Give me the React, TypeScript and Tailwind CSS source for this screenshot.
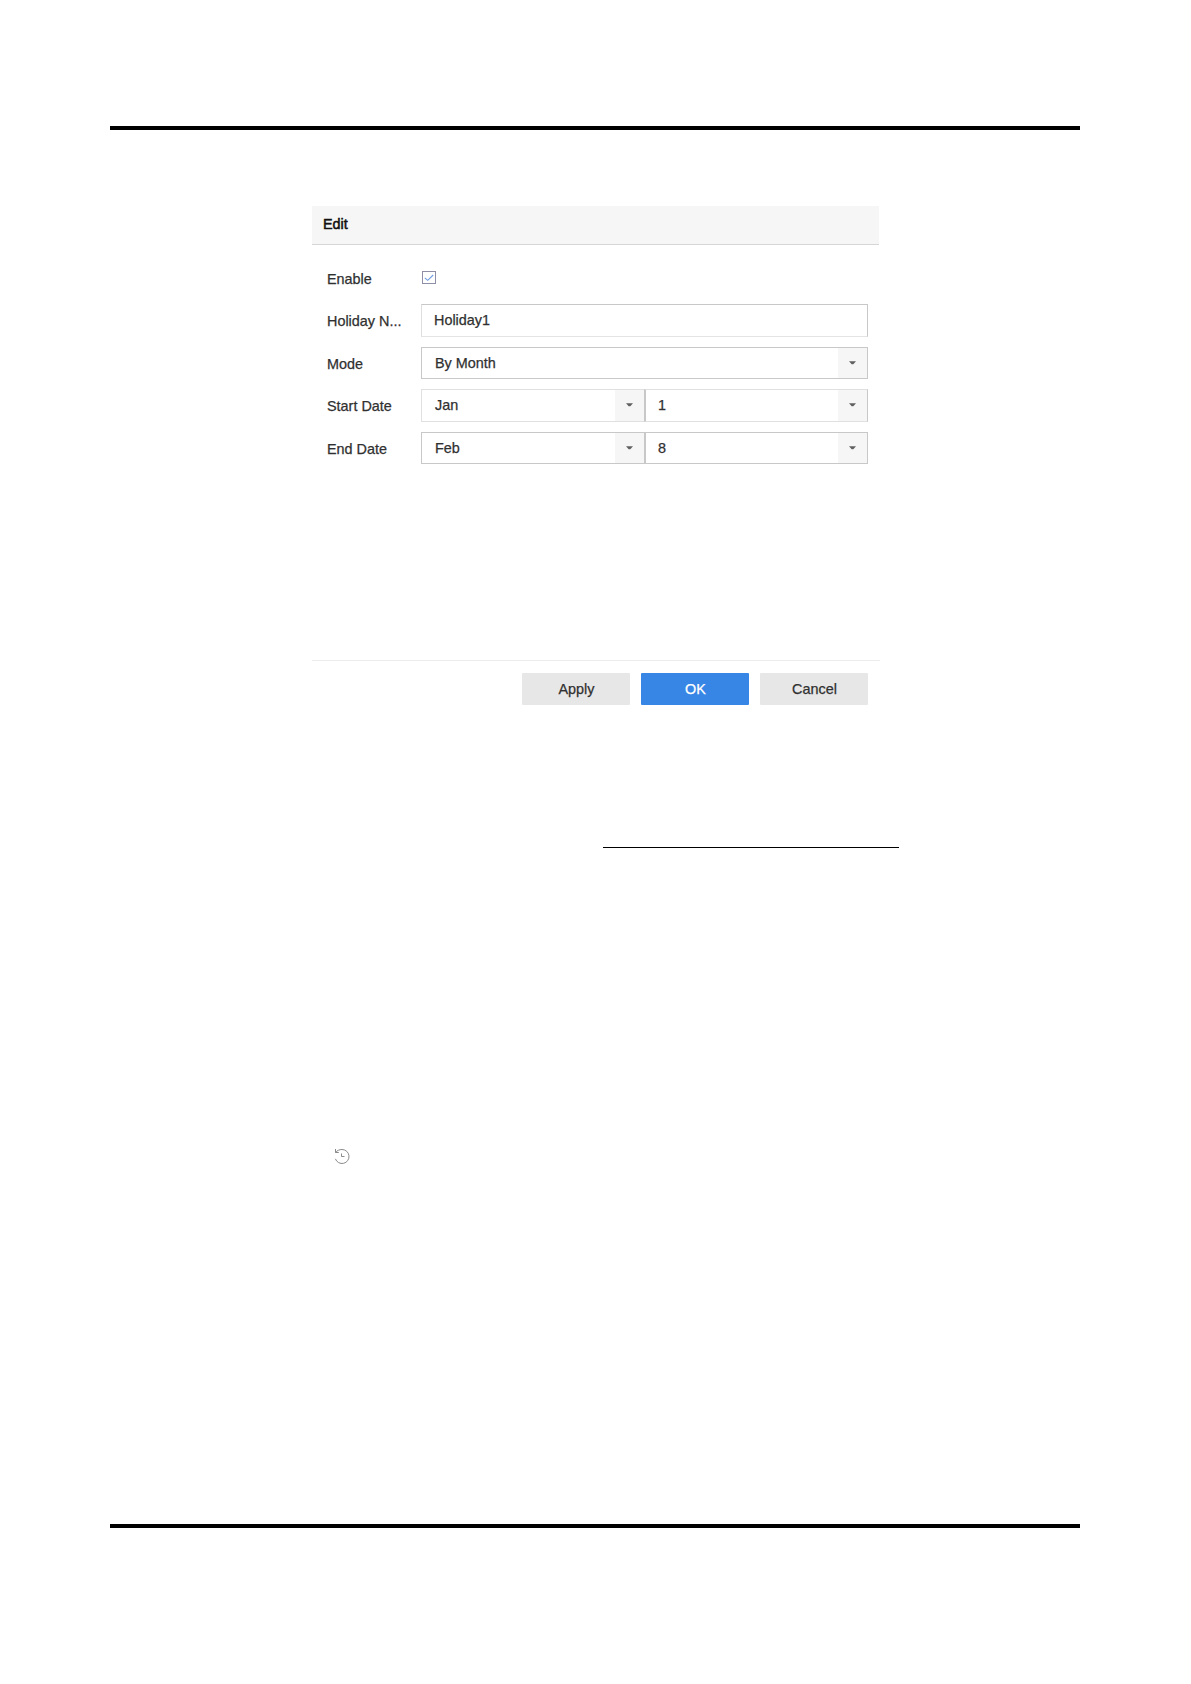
import type { ReactNode } from "react";

function Arrow() {
  return (
    <span className="flex w-[29px] shrink-0 items-center justify-center bg-[#f6f6f6]">
      <svg width="7" height="4" viewBox="0 0 7 4" className="mb-px">
        <path d="M0 0.3h7L4.3 3.2H2.7z" fill="#606060" />
      </svg>
    </span>
  );
}

function Select({ value, className }: { value: string; className: string }) {
  return (
    <button type="button" className={`flex items-stretch text-left ${className}`}>
      <span className="flex-1 leading-[31px]">{value}</span>
      <Arrow />
    </button>
  );
}

function Row({ label, className, children }: { label: string; className: string; children: ReactNode }) {
  return (
    <div className={`flex pl-[15px] ${className}`}>
      <span className="w-[94px] shrink-0 leading-[34px]">{label}</span>
      {children}
    </div>
  );
}

function HistoryIcon() {
  return (
    <svg width="17" height="17" viewBox="0 0 17 17" fill="none" stroke="#8a8a8a" strokeWidth="1">
      <path d="M1.5 4.5C3 2.6 5.4 1.5 8 1.5a7 7 0 1 1-6.6 9.3" />
      <path d="M1.5 1v3.5h3.3" />
      <path d="M7.5 5.5v3h3" />
    </svg>
  );
}

export default function App() {
  return (
    <main className="h-[1684px] w-[1191px] bg-white px-[110px] pt-[126px] font-['Liberation_Sans',Arial,sans-serif] text-[14.4px] text-[#303030]">
      <div className="h-1 w-[970px] bg-black" />

      <section className="ml-[202px] mt-[76px] flex h-[506px] w-[568px] flex-col [-webkit-text-stroke:0.25px]">
        <header className="h-[39px] w-[567px] border-b border-[#d6d6d6] bg-[#f6f6f6] pl-[11px] leading-[36px] text-[#111] [-webkit-text-stroke:0.5px]">
          Edit
        </header>

        <Row label="Enable" className="mt-[17px] h-[33px]">
          <span className="mt-[9px] ml-px flex h-[13px] w-[14px] items-center justify-center border border-[#8e8ea6]">
            <svg width="10" height="8" viewBox="0 0 10 8" fill="none" stroke="#6f9be0" strokeWidth="1.1">
              <path d="M0.8 3.8 3.7 6.3 9.2 1" />
            </svg>
          </span>
        </Row>
        <Row label="Holiday N..." className="mt-[9px] h-[33px]">
          <input
            readOnly
            value="Holiday1"
            className="h-[33px] w-[447px] border border-b-[#e4e4e4] border-l-[#dedede] border-r-[#c8c8c8] border-t-[#c8c8c8] pb-px pl-[12px] outline-none"
          />
        </Row>
        <Row label="Mode" className="mt-[10px] h-[32px]">
          <Select value="By Month" className="h-[32px] w-[447px] border border-[#c8c8c8] pl-[13px]" />
        </Row>
        <Row label="Start Date" className="mt-[10px] h-[33px]">
          <Select value="Jan" className="h-[33px] w-[223px] border border-r-0 border-[#e0e0e0] pl-[13px]" />
          <Select value="1" className="h-[33px] w-[224px] border border-l-2 border-y-[#e0e0e0] border-l-[#c8c8c8] border-r-[#c8c8c8] pl-[12px]" />
        </Row>
        <Row label="End Date" className="mt-[10px] h-[32px]">
          <Select value="Feb" className="h-[32px] w-[223px] border border-r-0 border-[#c8c8c8] pl-[13px]" />
          <Select value="8" className="h-[32px] w-[224px] border border-l-2 border-[#c8c8c8] pl-[12px]" />
        </Row>

        <footer className="mt-auto flex h-[52px] justify-end gap-[11px] border-t border-[#ececec] pr-3 pt-3 leading-[33px]">
          <button type="button" className="h-[32px] w-[108px] rounded-[1px] bg-[#e7e7e7] pl-px">Apply</button>
          <button type="button" className="h-[32px] w-[108px] rounded-[1px] bg-[#3786e6] pl-px text-white">OK</button>
          <button type="button" className="h-[32px] w-[108px] rounded-[1px] bg-[#e7e7e7] pl-px">Cancel</button>
        </footer>
      </section>

      <div className="ml-[493px] mt-[135px] h-px w-[296px] bg-black" />

      <div className="ml-[224px] mt-[300px] h-[17px]">
        <HistoryIcon />
      </div>

      <div className="mt-[359px] h-1 w-[970px] bg-black" />
    </main>
  );
}
